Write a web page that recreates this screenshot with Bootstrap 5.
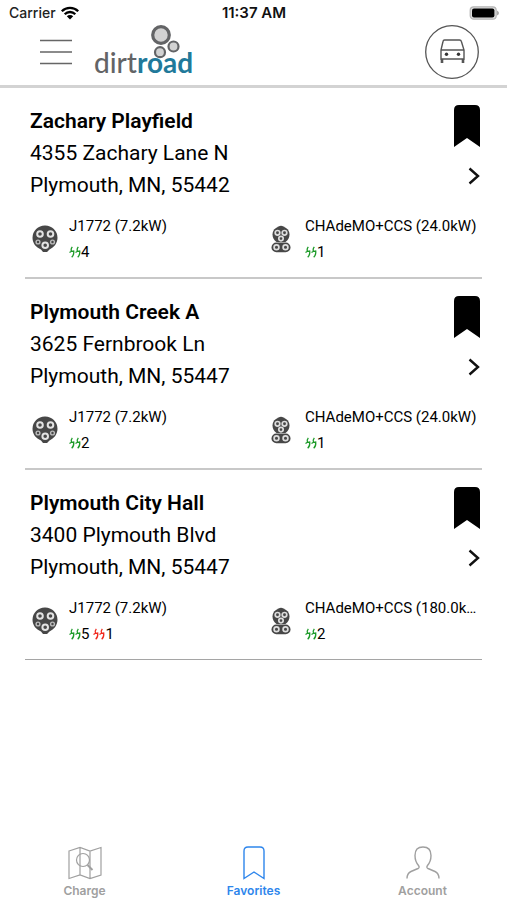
<!DOCTYPE html>
<html lang="en">
<head>
<meta charset="utf-8">
<meta name="viewport" content="width=device-width, initial-scale=1">
<title>dirtroad – Favorites</title>
<link href="https://cdn.jsdelivr.net/npm/bootstrap@5.3.0/dist/css/bootstrap.min.css" rel="stylesheet">
<style>
body{font-family:Roboto,"Liberation Sans",sans-serif;color:#000;background:#fff}
svg{display:block;flex:none}
button.plain{background:none;border:0;padding:0;color:inherit}
.status{font:500 14px/26px Inter,sans-serif;color:#222;padding:0 8px 0 9px}
.status>*{flex:1}
.status .clock{font-size:15px;font-weight:600;flex:none;color:#111}
.topbar{height:62px;border-bottom:3px solid #d3d3d3;padding:0 28px 7px 40px}
.logo{width:97px;height:54px;margin-left:22px;text-decoration:none;position:relative}
.logo .word{position:absolute;left:0;bottom:1px;font:500 28px/32px Lato,sans-serif;color:#636466}
.logo .word b{color:#21799a;font-weight:700}
.logo svg{position:absolute;right:11px;top:0}
.station{margin:0 25px;padding:17px 0 12px;border-bottom:2px solid #c8c8c8}
.station:last-child{border-bottom:1px solid #a5a5a5}
.place{font-size:21px;line-height:32px;padding-left:5px}
.place h2{font-size:21px;line-height:32px;font-weight:600;margin:0}
.plugs{margin-top:12px;font-size:15px;line-height:26px}
.plug{flex:0 0 236px;min-width:0}
.plug+.plug{flex:1 1 0}
.pic{flex:0 0 44px;padding-left:7px}
.plug+.plug .pic{padding-left:10px}
.free{color:#1c9a28}
.busy{color:#f0281e}
.tabs{padding-bottom:1px}
.tabs a{flex:1;text-decoration:none;color:#a0a0a0;font:600 12px/16px Inter,sans-serif}
.tabs a svg{margin:0 auto 3px}
.tabs a.active{color:#2e86ec}
</style>
</head>
<body class="d-flex flex-column min-vh-100">
<svg width="0" height="0" class="position-absolute" aria-hidden="true">
<defs>
<symbol id="j1772" viewBox="0 0 26 28">
<path d="M13 .5a12.300 12.300 0 0 1 12.500 12.300c0 5.500-3.500 9.700-8 11.700L15 27h-4l-2-2.500C4 22.500.5 18.300.5 12.800A12.300 12.300 0 0 1 13 .5z" fill="#474747"/>
<g fill="#474747" stroke="#e2e2e2" stroke-width="2"><circle cx="8" cy="9" r="2.800"/><circle cx="18.500" cy="9" r="2.800"/><circle cx="13.200" cy="20.300" r="2.800"/><g stroke-width="1.400" stroke="#bbb"><circle cx="6" cy="17" r="1.900"/><circle cx="20.500" cy="17" r="1.900"/></g></g>
</symbol>
<symbol id="combo" viewBox="0 0 20 28">
<path d="M7.500 1.500Q10 0 12.500 1.500L15 3c2.500 1.600 3.500 4 3.500 6.500 0 3-1.500 6-4 7.500h-9c-2.500-1.500-4-4.500-4-7.500C1.500 7 2.500 4.600 5 3z" fill="#474747"/><rect x=".5" y="17.500" width="19" height="9.800" rx="4.900" fill="#474747"/>
<g fill="#474747" stroke="#ddd" stroke-width="1.700"><circle cx="6.500" cy="7.800" r="2.300"/><circle cx="13.500" cy="7.800" r="2.300"/><circle cx="10" cy="13.600" r="2.200"/><circle cx="5.500" cy="22.300" r="2.400"/><circle cx="14.500" cy="22.300" r="2.400"/></g>
</symbol>
<symbol id="zap" viewBox="0 0 12 12">
<path d="M3.300.8Q1.500 3 2.500 5.300L4.700 5Q5.200 9 2.700 11.300M.5 6.500 2.500 5.300M9.300.8Q7.500 3 8.500 5.300L10.700 5Q11.200 9 8.700 11.300M6.500 6.500 8.500 5.300" fill="none" stroke="currentColor" stroke-width="1.300"/>
</symbol>
<symbol id="mark-full" viewBox="0 0 26 42"><path d="M0 42V5Q0 0 5 0H21Q26 0 26 5V42L13 33z"/></symbol>
<symbol id="next" viewBox="0 0 12 18"><path d="M1.500 1.500 10 9l-8.500 7.500" fill="none" stroke="#111" stroke-width="2.400"/></symbol>
</defs>
</svg>

<div class="status d-flex align-items-center">
<div class="d-flex align-items-center"><span>Carrier</span>
<svg class="ms-1" width="20" height="14" viewBox="0 0 20 14"><path d="M1.800 5.200a11.600 11.600 0 0 1 16.400 0M4.700 8.200a7.500 7.500 0 0 1 10.600 0" fill="none" stroke="#000" stroke-width="2.300"/><path d="M10 13.500 6.800 10.300a4.500 4.500 0 0 1 6.400 0z"/></svg></div>
<span class="clock">11:37 AM</span>
<div class="d-flex justify-content-end"><svg width="30" height="14" viewBox="0 0 30 14"><rect x="1.200" y=".8" width="26" height="12.400" rx="3.500" fill="#ddd" stroke="#b5b5b5" stroke-width="1.200"/><rect x="3" y="2.400" width="22.400" height="9.200" rx="2"/><path d="M28 4.500q2 1 2 2.500t-2 2.500z" fill="#aaa"/></svg></div>
</div>

<header class="topbar d-flex align-items-center">
<button class="plain" type="button" aria-label="Menu"><svg width="32" height="26" viewBox="0 0 32 26"><path d="M0 1.500h32M0 13h32M0 24.500h32" stroke="#666" stroke-width="1.600"/></svg></button>
<a class="logo" href="#" aria-label="dirtroad">
<svg width="30" height="36" viewBox="0 0 30 36"><g fill="#d2d2d2" stroke="#636466"><circle cx="11" cy="10" r="8.300" stroke-width="3.200"/><circle cx="23.500" cy="21.500" r="5" stroke-width="2.200"/><circle cx="10" cy="27.200" r="5" stroke-width="2.200"/></g></svg>
<span class="word">dirt<b>road</b></span></a>
<button class="plain ms-auto" type="button" aria-label="Vehicle"><svg width="54" height="54" viewBox="0 0 54 54" fill="none" stroke="#555"><circle cx="27" cy="27" r="26.300" stroke-width="1.300"/><path d="M19.500 15h15q1.500 0 1.900 1.500L39 25v9H16v-9l2-8.500Q18.300 15 19.500 15zM16 25h23" stroke-width="1.400"/><path d="M17 34v4m21-4v4" stroke-width="2.600"/><g fill="#333" stroke="none"><circle cx="21.500" cy="29.300" r="1.700"/><circle cx="33.500" cy="29.300" r="1.700"/></g></svg></button>
</header>

<main class="flex-grow-1">
<article class="station">
<div class="d-flex justify-content-between"><div class="place"><h2>Zachary Playfield</h2><div>4355 Zachary Lane N</div><div>Plymouth, MN, 55442</div></div>
<div class="d-flex flex-column align-items-end"><button class="plain" type="button" aria-label="Remove favorite"><svg width="28" height="42"><use href="#mark-full" width="26" height="42"/></svg></button><a href="#" class="mt-3 pt-1" aria-label="Details"><svg width="14" height="18"><use href="#next" width="12" height="18"/></svg></a></div></div>
<div class="plugs d-flex">
<div class="plug d-flex align-items-center"><div class="pic"><svg width="26" height="28"><use href="#j1772"/></svg></div><div class="text-truncate"><div class="text-truncate">J1772 (7.2kW)</div><div class="d-flex align-items-center"><svg class="free" width="12" height="12"><use href="#zap"/></svg>4</div></div></div>
<div class="plug d-flex align-items-center"><div class="pic"><svg width="20" height="28"><use href="#combo"/></svg></div><div class="text-truncate"><div class="text-truncate">CHAdeMO+CCS (24.0kW)</div><div class="d-flex align-items-center"><svg class="free" width="12" height="12"><use href="#zap"/></svg>1</div></div></div>
</div>
</article>
<article class="station">
<div class="d-flex justify-content-between"><div class="place"><h2>Plymouth Creek A</h2><div>3625 Fernbrook Ln</div><div>Plymouth, MN, 55447</div></div>
<div class="d-flex flex-column align-items-end"><button class="plain" type="button" aria-label="Remove favorite"><svg width="28" height="42"><use href="#mark-full" width="26" height="42"/></svg></button><a href="#" class="mt-3 pt-1" aria-label="Details"><svg width="14" height="18"><use href="#next" width="12" height="18"/></svg></a></div></div>
<div class="plugs d-flex">
<div class="plug d-flex align-items-center"><div class="pic"><svg width="26" height="28"><use href="#j1772"/></svg></div><div class="text-truncate"><div class="text-truncate">J1772 (7.2kW)</div><div class="d-flex align-items-center"><svg class="free" width="12" height="12"><use href="#zap"/></svg>2</div></div></div>
<div class="plug d-flex align-items-center"><div class="pic"><svg width="20" height="28"><use href="#combo"/></svg></div><div class="text-truncate"><div class="text-truncate">CHAdeMO+CCS (24.0kW)</div><div class="d-flex align-items-center"><svg class="free" width="12" height="12"><use href="#zap"/></svg>1</div></div></div>
</div>
</article>
<article class="station">
<div class="d-flex justify-content-between"><div class="place"><h2>Plymouth City Hall</h2><div>3400 Plymouth Blvd</div><div>Plymouth, MN, 55447</div></div>
<div class="d-flex flex-column align-items-end"><button class="plain" type="button" aria-label="Remove favorite"><svg width="28" height="42"><use href="#mark-full" width="26" height="42"/></svg></button><a href="#" class="mt-3 pt-1" aria-label="Details"><svg width="14" height="18"><use href="#next" width="12" height="18"/></svg></a></div></div>
<div class="plugs d-flex">
<div class="plug d-flex align-items-center"><div class="pic"><svg width="26" height="28"><use href="#j1772"/></svg></div><div class="text-truncate"><div class="text-truncate">J1772 (7.2kW)</div><div class="d-flex align-items-center"><svg class="free" width="12" height="12"><use href="#zap"/></svg>5<svg class="busy ms-1" width="12" height="12"><use href="#zap"/></svg>1</div></div></div>
<div class="plug d-flex align-items-center"><div class="pic"><svg width="20" height="28"><use href="#combo"/></svg></div><div class="text-truncate"><div class="text-truncate">CHAdeMO+CCS (180.0k…</div><div class="d-flex align-items-center"><svg class="free" width="12" height="12"><use href="#zap"/></svg>2</div></div></div>
</div>
</article>
</main>
<nav class="tabs d-flex text-center">
<a href="#"><svg width="34" height="34" viewBox="0 0 34 34" fill="none" stroke="#a0a0a0" stroke-width="1.200"><path d="M1 5 12 1.500 22 5 33 1.500V29L22 32.500 12 29 1 32.500zM12 1.500V29M22 5v27.500"/><circle cx="15" cy="14" r="6.500"/><path d="m19.500 19 5 5" stroke-width="2"/></svg>Charge</a>
<a href="#" class="active" aria-current="page"><svg width="34" height="34" viewBox="0 0 34 34" fill="none" stroke="#2e86ec" stroke-width="1.400"><path d="M7 32.500V5Q7 1 11 1H23Q27 1 27 5V32.500L17 26z"/></svg>Favorites</a>
<a href="#"><svg width="34" height="34" viewBox="0 0 34 34" fill="none" stroke="#a0a0a0" stroke-width="1.400"><path d="M1 32.500Q1 27.500 5 25.500L12 22.500Q14 21.500 12.500 19.500 9 15.500 9 9.500 9 1 17 1T25 9.500Q25 15.500 21.500 19.500 20 21.500 22 22.500L29 25.500Q33 27.500 33 32.500"/></svg>Account</a>
</nav>
<script src="https://cdn.jsdelivr.net/npm/bootstrap@5.3.0/dist/js/bootstrap.bundle.min.js"></script>
</body>
</html>
